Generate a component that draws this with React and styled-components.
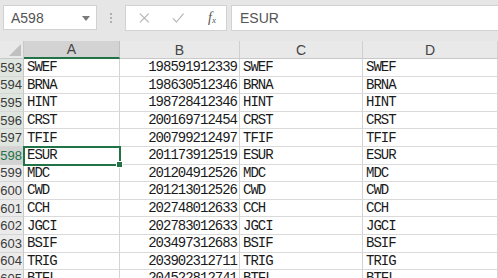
import React from "react";
import styled, { createGlobalStyle } from "styled-components";

const GlobalStyle = createGlobalStyle`
  html, body {
    margin: 0;
    padding: 0;
    background: #e6e6e6;
  }
  body {
    width: 498px;
    height: 278px;
    overflow: hidden;
    font-family: "Liberation Sans", Arial, sans-serif;
  }
`;

const rows = [
  ["593", "SWEF", "198591912339", "SWEF", "SWEF"],
  ["594", "BRNA", "198630512346", "BRNA", "BRNA"],
  ["595", "HINT", "198728412346", "HINT", "HINT"],
  ["596", "CRST", "200169712454", "CRST", "CRST"],
  ["597", "TFIF", "200799212497", "TFIF", "TFIF"],
  ["598", "ESUR", "201173912519", "ESUR", "ESUR"],
  ["599", "MDC", "201204912526", "MDC", "MDC"],
  ["600", "CWD", "201213012526", "CWD", "CWD"],
  ["601", "CCH", "202748012633", "CCH", "CCH"],
  ["602", "JGCI", "202783012633", "JGCI", "JGCI"],
  ["603", "BSIF", "203497312683", "BSIF", "BSIF"],
  ["604", "TRIG", "203902312711", "TRIG", "TRIG"],
  ["605", "BTFL", "204522812741", "BTFL", "BTFL"],
];

function App() {
  return (
    <>
      <GlobalStyle />
      <Window>
        <FormulaBar>
          <NameBox>
            <span>A598</span>
            <svg width="8" height="5" viewBox="0 0 8 5">
              <path d="M0 0 L8 0 L4 5 Z" fill="#7a7a7a" />
            </svg>
          </NameBox>
          <Grip>
            <i />
            <i />
            <i />
          </Grip>
          <Buttons>
            <svg width="12" height="12" viewBox="0 0 12 12">
              <path d="M1 1 L11 11 M11 1 L1 11" stroke="#b4b4b4" strokeWidth="1.3" />
            </svg>
            <svg width="14" height="12" viewBox="0 0 14 12">
              <path d="M1 6.5 L5 10.5 L13 1" stroke="#b4b4b4" strokeWidth="1.3" fill="none" />
            </svg>
            <Fx>
              f<sub>x</sub>
            </Fx>
          </Buttons>
          <Input>ESUR</Input>
        </FormulaBar>
        <Sheet>
          <Corner>
            <svg width="12" height="12" viewBox="0 0 12 12">
              <path d="M12 0 L12 12 L0 12 Z" fill="#c0c0c0" />
            </svg>
          </Corner>
          <ColHead $active>A</ColHead>
          <ColHead>B</ColHead>
          <ColHead>C</ColHead>
          <ColHead>D</ColHead>
          {rows.map((r) => {
            const selected = r[0] === "598";
            const tinted = Number(r[0]) < 599;
            return (
              <React.Fragment key={r[0]}>
                <RowHead $selected={selected} $tinted={tinted}>
                  {r[0]}
                </RowHead>
                <Cell $selected={selected}>{r[1]}</Cell>
                <Cell $align="right">{r[2]}</Cell>
                <Cell>{r[3]}</Cell>
                <Cell>{r[4]}</Cell>
              </React.Fragment>
            );
          })}
        </Sheet>
      </Window>
    </>
  );
}

const Window = styled.div`
  width: 498px;
  height: 278px;
  display: flex;
  flex-direction: column;
  overflow: hidden;
`;

const FormulaBar = styled.div`
  height: 41px;
  flex-shrink: 0;
  display: flex;
  align-items: flex-start;
  padding: 5px 0 0 3px;
  box-sizing: border-box;
  background: #e6e6e6;
`;

const NameBox = styled.div`
  width: 94px;
  height: 25px;
  box-sizing: border-box;
  background: #fff;
  border: 1px solid #d2d2d2;
  display: flex;
  align-items: center;
  justify-content: space-between;
  padding: 0 6px 0 7px;
  font-size: 14px;
  color: #555;

  svg {
    margin-top: 1px;
  }
`;

const Grip = styled.div`
  width: 28px;
  height: 25px;
  display: flex;
  flex-direction: column;
  align-items: center;
  justify-content: center;
  gap: 2px;

  i {
    width: 2px;
    height: 2px;
    background: #b0b0b0;
  }
`;

const Buttons = styled.div`
  width: 102px;
  height: 26px;
  box-sizing: border-box;
  background: #fff;
  border: 1px solid #d2d2d2;
  display: flex;
  align-items: center;
  padding: 0 10px 0 13px;
  gap: 22px;
`;

const Fx = styled.span`
  font-family: "Liberation Serif", "Times New Roman", serif;
  font-style: italic;
  font-size: 14px;
  color: #555;
  margin-left: 2px;

  sub {
    font-size: 9px;
    vertical-align: -1px;
  }
`;

const Input = styled.div`
  flex: 1;
  height: 26px;
  margin-left: 4px;
  box-sizing: border-box;
  background: #fff;
  border: 1px solid #d2d2d2;
  border-right: none;
  display: flex;
  align-items: center;
  padding-left: 8px;
  font-size: 14px;
  color: #555;
`;

const Sheet = styled.div`
  flex-shrink: 0;
  display: grid;
  grid-template-columns: 24px 96px 120px 123px 135px;
  grid-template-rows: 18px;
  grid-auto-rows: 17.6px;
  background: #fff;
`;

const Corner = styled.div`
  background: #e9e9e9;
  border-right: 1px solid #c8c8c8;
  border-bottom: 1px solid #c8c8c8;
  display: flex;
  align-items: flex-end;
  justify-content: flex-end;
  padding: 0 2px 2px 0;
`;

const ColHead = styled.div`
  background: ${(p) => (p.$active ? "#d3d3d3" : "#e9e9e9")};
  border-right: 1px solid ${(p) => (p.$active ? "#c0c0c0" : "#cfcfcf")};
  border-bottom: ${(p) => (p.$active ? "2px solid #217346" : "1px solid #c8c8c8")};
  display: flex;
  align-items: center;
  justify-content: center;
  font-size: 14px;
  color: #444;
`;

const RowHead = styled.div`
  background: ${(p) => (p.$selected ? "#d3d3d3" : p.$tinted ? "#dfe6df" : "#ebebeb")};
  border-right: 1px solid #c8c8c8;
  border-bottom: 1px solid #d6d6d6;
  display: flex;
  align-items: center;
  justify-content: flex-end;
  padding-right: 1px;
  font-size: 13px;
  color: ${(p) => (p.$selected ? "#217346" : "#3a3a3a")};
  overflow: hidden;
`;

const Cell = styled.div`
  position: relative;
  border-right: 1px solid #d4d4d4;
  border-bottom: 1px solid #dadada;
  display: flex;
  align-items: center;
  justify-content: ${(p) => (p.$align === "right" ? "flex-end" : "flex-start")};
  padding: 0 2px 0 3px;
  font-family: "Liberation Mono", "Courier New", monospace;
  font-size: 14px;
  letter-spacing: -1px;
  color: #1a1a1a;
  white-space: nowrap;
  outline: ${(p) => (p.$selected ? "2px solid #217346" : "none")};
  outline-offset: -1px;
  z-index: ${(p) => (p.$selected ? 2 : 0)};

  &::after {
    content: "";
    display: ${(p) => (p.$selected ? "block" : "none")};
    position: absolute;
    right: -4px;
    bottom: -4px;
    width: 5px;
    height: 5px;
    background: #217346;
    border: 1px solid #fff;
  }
`;

export default App;
